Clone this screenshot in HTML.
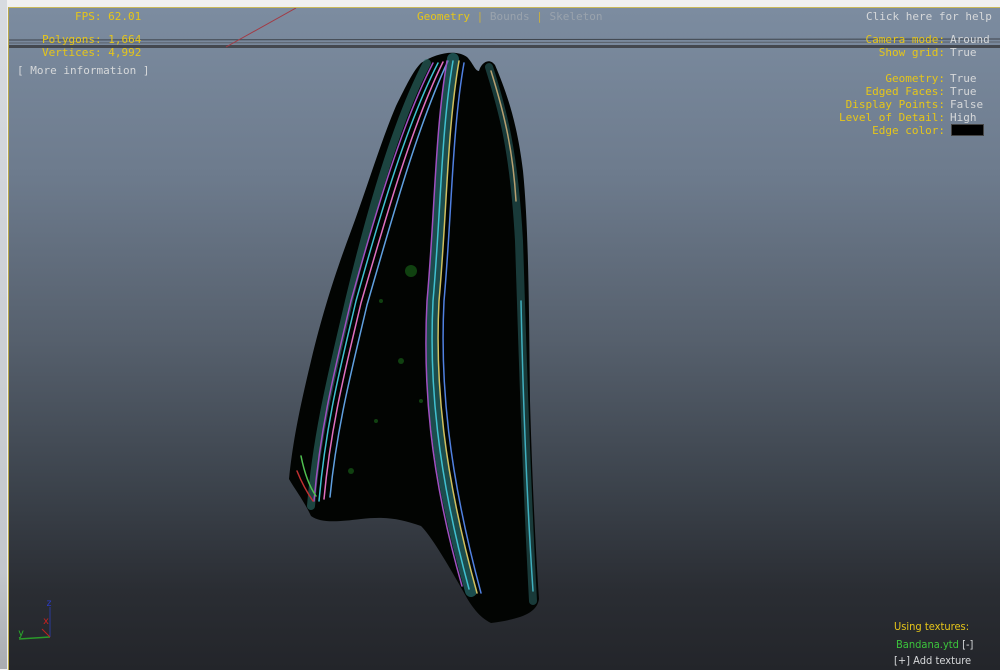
<!DOCTYPE html><html><head><style>
html,body{margin:0;padding:0;width:1000px;height:669px;overflow:hidden;background:#f0f0f0}
#lft{position:absolute;left:0;top:0;width:7px;height:669px;background:linear-gradient(#d7dbe0,#c3c7cc 85%,#a9acb0)}
#vp{position:absolute;left:8px;top:7px;width:992px;height:662px;background:linear-gradient(#7c8ca0 0%,#6d7b8d 25%,#56606d 50%,#3c434c 72%,#2a2d33 88%,#23252a 100%);border-left:1px solid #b8a84a;border-top:1px solid #c8b85a;overflow:hidden}
.t{position:absolute;font-family:"DejaVu Sans Mono","Liberation Mono",monospace;font-size:11px;line-height:13px;white-space:pre;color:#e6c619}
.w{color:#d6d8da}
.g{color:#9aa3ad}
.gr{color:#3cc43c}
</style></head><body>
<div id="lft"></div>
<div id="vp">
<svg width="992" height="662" style="position:absolute;left:0;top:0" viewBox="8 7 992 662">
<line x1="8" y1="39" x2="1000" y2="38" stroke="#3e444c" stroke-width="1"/>
<line x1="8" y1="42" x2="1000" y2="41" stroke="#59606a" stroke-width="1"/>
<rect x="8" y="44" width="992" height="3" fill="#44484f"/>
<line x1="295" y1="7" x2="225" y2="46" stroke="#a33a44" stroke-width="1"/>
<path d="M420 62 C435 52 455 48 466 56 C472 62 474 70 478 70 C480 62 488 56 494 64 C505 90 516 120 522 170 C528 230 528 320 529 400 C531 470 534 540 538 598 C536 612 520 618 490 622 C478 616 470 605 462 590 C445 560 430 535 420 525 C400 518 385 515 360 518 C335 521 320 522 310 515 C303 500 295 490 288 478 C292 440 298 410 310 360 C322 310 335 270 350 230 C365 190 380 140 395 105 C405 85 412 70 420 62 Z" fill="#020402"/>
<g fill="none" stroke-linecap="round" stroke-width="1.5">
<path d="M426 62 C398 115 372 200 348 300 C333 365 316 430 310 505" stroke="#2f6f6a" stroke-width="8" opacity="0.6"/>
<path d="M432 62 C402 120 375 210 350 300 C336 360 320 420 313 500" stroke="#a050c0"/>
<path d="M437 62 C407 120 380 210 355 300 C341 360 325 420 318 500" stroke="#40c0d0"/>
<path d="M442 61 C412 122 386 212 360 302 C346 362 330 422 323 498" stroke="#e070c0"/>
<path d="M447 60 C417 124 392 214 366 304 C352 364 336 424 329 496" stroke="#60a0e0"/>
<path d="M452 58 C440 130 440 210 432 300 C428 380 435 470 470 590" stroke="#2f7f80" stroke-width="12" opacity="0.6"/>
<path d="M446 60 C434 130 434 210 426 300 C422 380 428 470 461 585" stroke="#a050c0"/>
<path d="M452 60 C440 130 440 210 432 300 C428 380 436 470 468 588" stroke="#40c0d0"/>
<path d="M458 60 C446 130 446 210 438 300 C434 380 442 470 476 592" stroke="#d0c060"/>
<path d="M463 62 C451 130 451 210 443 300 C439 380 447 470 480 592" stroke="#5080e0"/>
<path d="M488 66 C502 110 513 150 518 240 C521 330 524 450 532 600" stroke="#2f6f70" stroke-width="8" opacity="0.5"/>
<path d="M490 70 C504 115 512 150 515 200" stroke="#b8a070"/>
<path d="M520 300 C522 400 526 500 532 590" stroke="#40b0c0"/>
<path d="M296 470 C300 480 305 490 312 500" stroke="#c03030"/>
<path d="M300 455 C303 470 308 485 315 495" stroke="#50c050"/>
</g>
<g fill="#1a6a1a" opacity="0.6"><circle cx="410" cy="270" r="6"/><circle cx="400" cy="360" r="3"/><circle cx="350" cy="470" r="3"/><circle cx="375" cy="420" r="2"/><circle cx="380" cy="300" r="2"/><circle cx="420" cy="400" r="2"/></g>
<line x1="49" y1="606" x2="49" y2="636" stroke="#2a3a9a"/>
<line x1="18" y1="638" x2="49" y2="636" stroke="#2a9a2a" stroke-width="1.5"/>
<line x1="41" y1="628" x2="49" y2="636" stroke="#c02020"/>
</svg>
<div class="t" style="left:66px;top:2px">FPS: 62.01</div>
<div class="t" style="left:33px;top:25px">Polygons: 1,664
Vertices: 4,992</div>
<div class="t w" style="left:8px;top:56px">[ More information ]</div>
<div class="t" style="left:408px;top:2px">Geometry <span style="color:#c8b040">|</span> <span class="g">Bounds</span> <span style="color:#c8b040">|</span> <span class="g">Skeleton</span></div>
<div class="t w" style="left:857px;top:2px">Click here for help</div>
<div class="t" style="left:790px;top:25px;text-align:right;width:146px">Camera mode:
Show grid:

Geometry:
Edged Faces:
Display Points:
Level of Detail:
Edge color:</div>
<div class="t w" style="left:941px;top:25px">Around
True

True
True
False
High</div>
<div style="position:absolute;left:942px;top:116px;width:31px;height:10px;background:#000;border:1px solid #444"></div>
<div class="t" style="left:37px;top:589px;color:#2a3ac0;font-size:10px">z</div>
<div class="t" style="left:34px;top:607px;color:#d02020;font-size:10px">x</div>
<div class="t" style="left:9px;top:619px;color:#2ab02a;font-size:10px">y</div>
<div class="t" style="left:885px;top:612px;font-family:'Liberation Sans Narrow','DejaVu Sans Condensed',sans-serif">Using textures:</div>
<div class="t" style="left:887px;top:630px;font-family:'Liberation Sans Narrow','DejaVu Sans Condensed',sans-serif"><span class="gr">Bandana.ytd</span><span class="w"> [-]</span></div>
<div class="t w" style="left:885px;top:646px;font-family:'Liberation Sans Narrow','DejaVu Sans Condensed',sans-serif">[+] Add texture</div>
</div>
</body></html>
